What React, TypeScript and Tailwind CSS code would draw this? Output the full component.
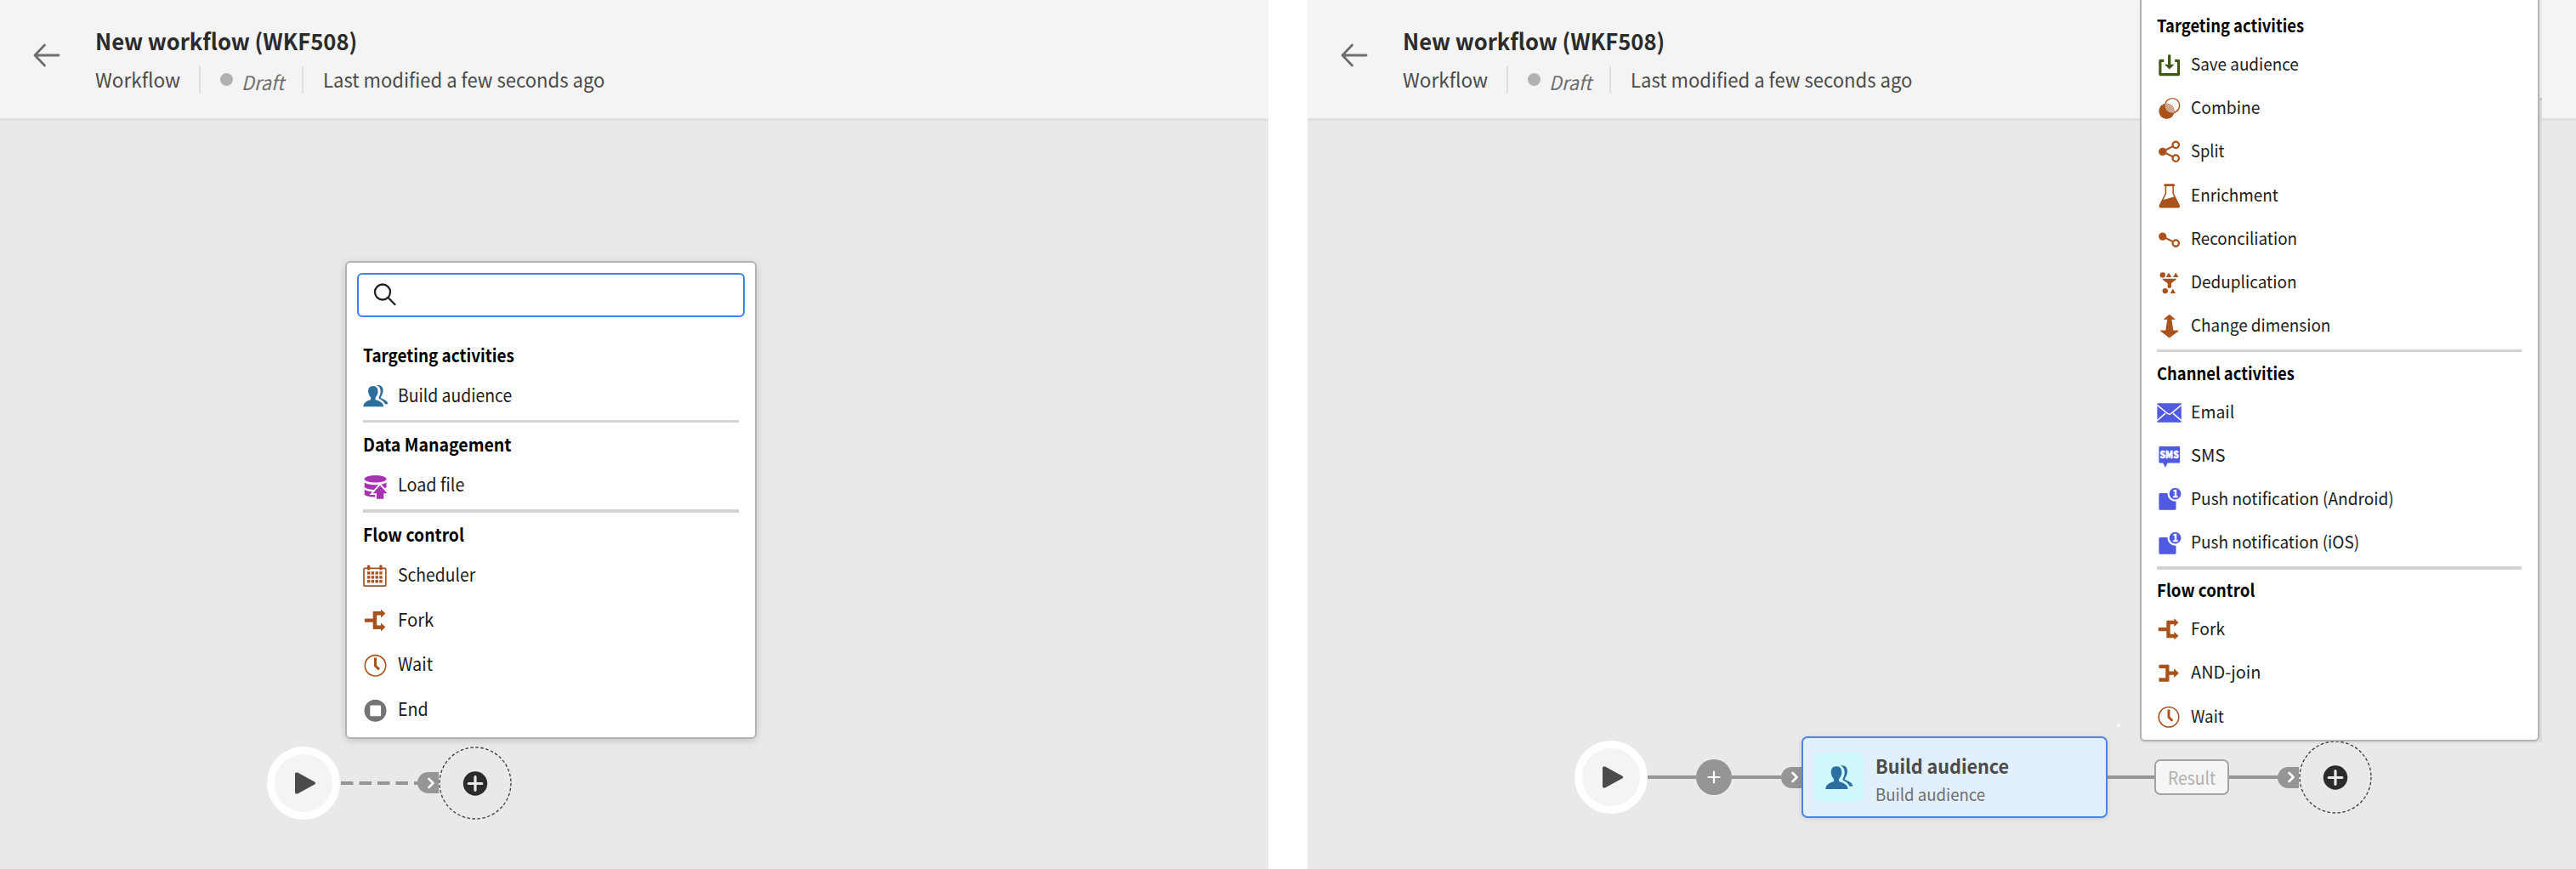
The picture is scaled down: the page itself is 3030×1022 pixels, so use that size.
import { useLayoutEffect, useRef, useState, type ReactNode } from 'react';

const RUST = '#a9521c';
const INDIGO = '#505ae0';

/* One line of text condensed to a fixed advance width. */
function Label({ text, width, className = '' }: { text: string; width: number; className?: string }) {
  const ref = useRef<HTMLSpanElement>(null);
  const [scale, setScale] = useState(1);
  useLayoutEffect(() => {
    if (ref.current) setScale(width / ref.current.offsetWidth);
  }, [width, text]);
  return (
    <span className={`block shrink-0 whitespace-nowrap leading-none ${className}`} style={{ width }}>
      <span ref={ref} className="inline-block origin-left" style={{ transform: `scaleX(${scale})` }}>
        {text}
      </span>
    </span>
  );
}

function Svg({ children, className = 'size-full' }: { children: ReactNode; className?: string }) {
  return (
    <svg viewBox="0 0 30 30" className={className} fill="none">
      {children}
    </svg>
  );
}

const AudienceIcon = ({ className }: { className?: string }) => (
  <Svg className={className}>
    <g fill="#2c6f9f">
      <path d="M11.8 3C7.5 3 5.9 6.2 6.2 10c.3 3 1.6 5 3 6.600V19C6 20.300.6 21.300.3 27.300H24.200C23.900 21.300 17.800 20.300 14.600 19V16.600c1.400-1.600 2.700-3.600 2.900-6.600C17.900 6.200 16 3 11.800 3Z" />
      <path d="M16.300 2.300C20.500 1.200 23.600 4 23.600 8c0 4-1.500 6-2.700 8v1.100c2 1.500 8.200 2.600 8.500 7.200H25.900c-1.300-3.600-4.900-5.200-7.200-6.500V15.700c1.600-2 2-4.700 1.900-7.100-.2-3.100-1.600-5.200-4.300-6.300Z" />
    </g>
  </Svg>
);

const LoadFileIcon = () => (
  <Svg>
    <g fill="#a733b3">
      <ellipse cx="14.600" cy="6.300" rx="13" ry="4.300" />
      <path d="M1.700 10.200c3.800 4 22 4 25.800 0V16c-3.800 4-22 4-25.800 0Z" />
      <path d="M1.700 18.400c3.800 4 22 4 25.800 0v6.200c-3.800 4.200-22 4.200-25.800 0Z" />
    </g>
    <path d="M20 13.800 28.500 23.200H24.300V29.800H16V23.200H11.600Z" fill="#a733b3" stroke="#fff" strokeWidth="3.600" paintOrder="stroke" />
  </Svg>
);

const SchedulerIcon = () => (
  <Svg>
    <rect x="1" y="6.400" width="25.800" height="20.700" rx=".8" stroke={RUST} strokeWidth="1.700" />
    <g fill={RUST}>
      <rect x="5" y="2.500" width="3.300" height="5.900" rx="1.200" />
      <rect x="19.300" y="2.500" width="3.300" height="5.900" rx="1.200" />
      {[10.200, 15.200, 20].map((y) =>
        [5, 9.700, 14.500, 19.300].map((x) => <rect key={`${x}-${y}`} x={x} y={y} width="3.400" height="3.400" />),
      )}
    </g>
  </Svg>
);

const ForkIcon = () => (
  <Svg>
    <path
      fill={RUST}
      d="M1.800 13.200q0-.8.800-.8H11.700V4.800q0-.8.800-.8H21V1.400L26.400 6.400 21 11.400V8.600H17q-.8 0-.8.800V19.600q0 .8.800.8H21V17.500L26.400 22.500 21 27.500V25H12.500q-.8 0-.8-.8V16.800H2.600q-.8 0-.8-.8Z"
    />
  </Svg>
);

const JoinIcon = () => (
  <Svg>
    <path
      fill={RUST}
      d="M2.500 4.800q0-.8.800-.8H14.200q.8 0 .8.800V12H20.800V8.600L26.800 14.100 20.800 19.700V16.300H15V23.700q0 .8-.8.800H3.300q-.8 0-.8-.8V20.800q0-.8.800-.8H10.600V8.400H3.300q-.8 0-.8-.8Z"
    />
  </Svg>
);

const WaitIcon = () => (
  <Svg>
    <circle cx="14.500" cy="14.800" r="12.200" stroke={RUST} strokeWidth="1.600" />
    <path d="M14.500 5.600V15L19 19.400" stroke={RUST} strokeWidth="3" />
  </Svg>
);

const EndIcon = () => (
  <Svg>
    <circle cx="14.500" cy="14.800" r="13" fill="#747474" />
    <rect x="8.300" y="8.600" width="12.800" height="12.600" rx="1" fill="#fff" />
  </Svg>
);

const SaveIcon = () => (
  <Svg>
    <path d="M8.600 9.700H4V26.500H26.400V9.700H21.900" stroke="#3f5712" strokeWidth="3.200" strokeLinejoin="round" />
    <path d="M13.500 3.300q0-1 1-1h1.400q1 0 1 1V14.100H21.300L15.200 20.200 9.200 14.100H13.500Z" fill="#3f5712" />
  </Svg>
);

const CombineIcon = () => (
  <Svg>
    <defs>
      <pattern id="mesh" width="2.400" height="2.400" patternUnits="userSpaceOnUse">
        <rect width="1.200" height="1.200" fill="#fff" />
        <rect x="1.200" y="1.200" width="1.200" height="1.200" fill="#fff" />
      </pattern>
      <clipPath id="lens">
        <circle cx="12" cy="18.300" r="9.200" />
      </clipPath>
    </defs>
    <circle cx="11.900" cy="18.400" r="9.500" fill={RUST} />
    <circle cx="18.800" cy="11.500" r="8.800" stroke={RUST} strokeWidth="1.500" />
    <circle cx="18.800" cy="11.500" r="9" fill="url(#mesh)" clipPath="url(#lens)" />
  </Svg>
);

const SplitIcon = () => (
  <Svg>
    <path d="M20.500 7.900 7 14.800 20.500 21.400" stroke={RUST} strokeWidth="2.200" />
    <circle cx="7" cy="14.900" r="4.800" fill={RUST} />
    <circle cx="23" cy="6.600" r="3.800" fill="#fff" stroke={RUST} strokeWidth="2.400" />
    <circle cx="23" cy="22.900" r="3.800" fill="#fff" stroke={RUST} strokeWidth="2.400" />
  </Svg>
);

const EnrichmentIcon = () => (
  <Svg>
    <rect x="8.800" y=".2" width="13" height="3" rx="1" fill={RUST} />
    <path d="M10.800 3V12L3.600 26.500Q3 28.600 4.800 28.700H26Q27.600 28.600 27 26.500L19.800 12V3" stroke={RUST} strokeWidth="1.600" />
    <path d="M6.900 20 21.500 15.800 27 26.500Q27.600 28.600 26 28.700H4.800Q3 28.600 3.600 26.500Z" fill={RUST} />
  </Svg>
);

const ReconciliationIcon = () => (
  <Svg>
    <path d="M7 11.700 20.500 18.200" stroke={RUST} strokeWidth="2.200" />
    <circle cx="7" cy="11.500" r="4.800" fill={RUST} />
    <circle cx="23" cy="19.700" r="3.800" fill="#fff" stroke={RUST} strokeWidth="2.400" />
  </Svg>
);

const DeduplicationIcon = () => (
  <Svg>
    <g fill={RUST}>
      <circle cx="7" cy="5.600" r="3.300" />
      <path d="M14.500 2.500 17.800 8.300H11.200ZM23 2.500 26.300 8.300H19.700ZM19.500 22.200 22.800 28H16.200Z" />
      <path d="M6.800 10H23.400V11.200L17.500 15.800V20.600L16.700 21.400H14L13.100 20.600V15.800L6.800 11.200Z" />
      <circle cx="10.100" cy="24.900" r="3.300" />
    </g>
  </Svg>
);

const ChangeDimensionIcon = () => (
  <Svg>
    <path fill={RUST} d="M15.200.9 22 6.200V7H18L20 20.200H26.200V21.200L15.200 29.400 4.400 21.200V20.200H10.600L12.700 7H8.500V6.200Z" />
  </Svg>
);

const EmailIcon = () => (
  <Svg>
    <rect x=".4" y="3.400" width="29.400" height="23.200" rx="1" fill={INDIGO} />
    <path d="M.4 5.600 12.800 15.800Q15 17.600 17.300 15.800L29.800 5.600M.4 24.400 10.400 15.600M29.800 24.400 19.700 15.600" stroke="#fff" strokeWidth="1.600" />
  </Svg>
);

const SmsIcon = () => (
  <Svg>
    <path d="M3.400 3.200H27.200q.9 0 .9.900V22.500q0 .9-.9.900H13L10.300 28.900 7.500 23.400H3.400q-.9 0-.9-.9V4.100q0-.9.900-.9Z" fill={INDIGO} />
    <text x="3.600" y="17.400" fontSize="12" fontWeight="900" textLength="23.200" lengthAdjust="spacingAndGlyphs" fill="#fff" stroke="#fff" strokeWidth=".5" fontFamily="'Noto Sans CJK SC', sans-serif">
      SMS
    </text>
  </Svg>
);

const PushIcon = () => (
  <Svg>
    <rect x="2.500" y="7.200" width="20.800" height="20.600" rx="1.500" fill={INDIGO} />
    <circle cx="22.300" cy="7.900" r="9.400" fill="#fff" />
    <circle cx="22.300" cy="7.900" r="7.100" fill={INDIGO} />
    <text x="22.300" y="12.300" textAnchor="middle" fontSize="12" fontWeight="700" fill="#fff" stroke="#fff" strokeWidth=".4" fontFamily="'Noto Sans CJK SC', sans-serif">
      1
    </text>
  </Svg>
);

type Item = { icon: ReactNode; text: string; width: number };
type Section = { title: string; width: number; items: Item[] };

const firstMenu: Section[] = [
  { title: 'Targeting activities', width: 178, items: [{ icon: <AudienceIcon />, text: 'Build audience', width: 134 }] },
  { title: 'Data Management', width: 174.5, items: [{ icon: <LoadFileIcon />, text: 'Load file', width: 78 }] },
  {
    title: 'Flow control',
    width: 119,
    items: [
      { icon: <SchedulerIcon />, text: 'Scheduler', width: 91 },
      { icon: <ForkIcon />, text: 'Fork', width: 42 },
      { icon: <WaitIcon />, text: 'Wait', width: 41 },
      { icon: <EndIcon />, text: 'End', width: 36 },
    ],
  },
];

const secondMenu: Section[] = [
  {
    title: 'Targeting activities',
    width: 173,
    items: [
      { icon: <SaveIcon />, text: 'Save audience', width: 127 },
      { icon: <CombineIcon />, text: 'Combine', width: 81 },
      { icon: <SplitIcon />, text: 'Split', width: 39 },
      { icon: <EnrichmentIcon />, text: 'Enrichment', width: 103 },
      { icon: <ReconciliationIcon />, text: 'Reconciliation', width: 125 },
      { icon: <DeduplicationIcon />, text: 'Deduplication', width: 125 },
      { icon: <ChangeDimensionIcon />, text: 'Change dimension', width: 164 },
    ],
  },
  {
    title: 'Channel activities',
    width: 162,
    items: [
      { icon: <EmailIcon />, text: 'Email', width: 51 },
      { icon: <SmsIcon />, text: 'SMS', width: 40 },
      { icon: <PushIcon />, text: 'Push notification (Android)', width: 239 },
      { icon: <PushIcon />, text: 'Push notification (iOS)', width: 198 },
    ],
  },
  {
    title: 'Flow control',
    width: 115,
    items: [
      { icon: <ForkIcon />, text: 'Fork', width: 40 },
      { icon: <JoinIcon />, text: 'AND-join', width: 82 },
      { icon: <WaitIcon />, text: 'Wait', width: 39 },
    ],
  },
];

function Header() {
  return (
    <header className="flex h-[142px] border-b-[3px] border-[#e0e0e0] bg-[#f4f4f4]">
      <svg viewBox="0 0 32 28" className="mt-[51px] ml-[39px] h-7 w-8 shrink-0" fill="none" stroke="#6e6e6e" strokeWidth="2.800" strokeLinecap="round" strokeLinejoin="round">
        <path d="M30 14H2.500M13.500 2 2 14 13.500 26" />
      </svg>
      <div className="ml-[41px] pt-[35px]">
        <Label text="New workflow (WKF508)" width={308} className="text-[26.5px] font-bold text-[#2b2b2b]" />
        <div className="mt-[16px] flex h-8 items-center text-[23px] text-[#4b4b4b]">
          <Label text="Workflow" width={100} />
          <div className="ml-[22px] h-8 w-0.5 bg-[#e0e0e0]" />
          <div className="ml-[23px] size-[15px] rounded-full bg-[#b1b1b1]" />
          <Label text="Draft" width={50} className="mt-[5px] ml-[10px] text-[#6e6e6e] italic" />
          <div className="ml-[21px] h-8 w-0.5 bg-[#e0e0e0]" />
          <Label text="Last modified a few seconds ago" width={331} className="ml-[23px]" />
        </div>
      </div>
    </header>
  );
}

function StartNode() {
  return (
    <div className="flex size-[86px] shrink-0 items-center justify-center rounded-full border-[9px] border-white bg-[#f4f4f4]">
      <svg viewBox="0 0 26 26" className="ml-[3px] size-[26px]" fill="#4b4b4b">
        <path d="M1 2Q1 .5 2.500.5H4L24.500 11.800Q26 13 24.500 14.200L4 25.500H2.500Q1 25.500 1 24Z" />
      </svg>
    </div>
  );
}

function Port() {
  return (
    <div className="flex h-[25px] w-[25px] shrink-0 items-center justify-center rounded-l-full bg-[#959595] pl-1.5">
      <svg viewBox="0 0 10 14" className="h-3.5 w-2.5" fill="none" stroke="#fff" strokeWidth="2.600" strokeLinecap="round" strokeLinejoin="round">
        <path d="M2.500 2 7.500 7 2.500 12" />
      </svg>
    </div>
  );
}

function AddTarget() {
  return (
    <svg viewBox="0 0 86 86" className="size-[86px] shrink-0" fill="none">
      <circle cx="43" cy="43" r="42" stroke="#3a3a3a" strokeWidth="1.300" strokeDasharray="3.500 2.500" />
      <circle cx="43" cy="43.500" r="14.200" fill="#2b2b2b" />
      <path d="M43 35.700V51.300M35.200 43.500H50.800" stroke="#e9e9e9" strokeWidth="3.200" strokeLinecap="round" />
    </svg>
  );
}

function Menu({ sections, size }: { sections: Section[]; size: 'lg' | 'md' }) {
  const lg = size === 'lg';
  return (
    <>
      {sections.map((section, i) => (
        <section key={section.title}>
          {i > 0 && (
            <div className={lg ? 'flex h-[10.9px] items-start pt-[2px]' : 'flex h-[10.6px] items-start pt-[2.600px]'}>
              <div className="h-[3.500px] w-full bg-[#d3d3d3]" />
            </div>
          )}
          <div className={lg ? 'flex h-[42px] items-center' : 'flex h-10 items-center'}>
            <Label text={section.title} width={section.width} className={lg ? 'pb-0.5 font-bold text-black' : 'font-bold text-black'} />
          </div>
          {section.items.map((item) => (
            <div key={item.text} className={lg ? 'flex h-[52.800px] items-center gap-[11px]' : 'flex h-[51.200px] items-center gap-[11.500px]'}>
              <div className={lg ? 'mt-px size-[30px] shrink-0' : 'mt-0.5 size-[29px] shrink-0'}>{item.icon}</div>
              <Label text={item.text} width={item.width} className={lg ? 'pb-[3px] text-[#1c1c1c]' : 'pb-px text-[#1c1c1c]'} />
            </div>
          ))}
        </section>
      ))}
    </>
  );
}

export default function App() {
  return (
    <div className="flex h-[1022px] w-[3030px] gap-[46px] overflow-hidden bg-white" style={{ fontFamily: "'Noto Sans CJK SC', 'Noto Sans', sans-serif" }}>
      <div className="relative w-[1492px] shrink-0 overflow-hidden bg-[#e9e9e9]">
        <Header />
        <div className="mt-[735.500px] ml-[314px] flex items-center">
          <StartNode />
          <svg viewBox="0 0 91 4" className="h-1 w-[91px] shrink-0">
            <path d="M1 2H91" stroke="#959595" strokeWidth="4" strokeDasharray="14.500 7" />
          </svg>
          <Port />
          <AddTarget />
        </div>
        <div className="absolute top-[307px] left-[406px] h-[562px] w-[484px] rounded-[6px] border-2 border-[#b3b3b3] bg-white px-3 pt-3 shadow-[0_2px_9px_rgba(0,0,0,0.16)]">
          <div className="flex h-[52px] w-[456px] items-center rounded-[6px] border-2 border-[#3f82ee] pb-[3px] pl-4">
            <svg viewBox="0 0 28 28" className="size-7" fill="none" stroke="#222" strokeWidth="2.300" strokeLinecap="round">
              <circle cx="12" cy="11.500" r="9" />
              <path d="M18.500 18 26.500 26" />
            </svg>
          </div>
          <div className="mt-6 ml-[6.500px] w-[442px] text-[20.800px]">
            <Menu sections={firstMenu} size="lg" />
          </div>
        </div>
      </div>

      <div className="relative w-[1492px] shrink-0 overflow-hidden bg-[#e9e9e9]">
        <Header />
        <div className="mt-[724px] ml-[314px] flex items-center">
          <StartNode />
          <div className="h-1 w-[57px] bg-[#959595]" />
          <div className="flex size-[42px] items-center justify-center rounded-full bg-[#959595]">
            <svg viewBox="0 0 16 16" className="size-4" stroke="#fff" strokeWidth="2.200" strokeLinecap="round">
              <path d="M8 1.500V14.500M1.500 8H14.500" />
            </svg>
          </div>
          <div className="h-1 w-[58px] bg-[#959595]" />
          <Port />
          <div className="-ml-px flex h-[96px] w-[360px] items-center rounded-[7px] border-2 border-[#4c86e2] bg-[#e2f0fe] pl-[13px] shadow-[0_1px_6px_rgba(0,0,0,0.12)]">
            <div className="flex size-[58px] items-center justify-center rounded-[7px] bg-[#cff7fe]">
              <AudienceIcon className="size-[33px]" />
            </div>
            <div className="ml-[14px] pt-[5px]">
              <Label text="Build audience" width={157} className="text-[22.800px] font-bold text-[#4b4b4b]" />
              <Label text="Build audience" width={129} className="mt-[11px] text-[19.800px] text-[#6e6e6e]" />
            </div>
          </div>
          <div className="h-1 w-[55px] bg-[#959595]" />
          <div className="flex h-[42px] w-[88px] items-center justify-center rounded-[7px] border-2 border-[#a3a3a3] bg-[#f5f5f5]">
            <Label text="Result" width={56} className="text-[21px] text-[#b1b1b1]" />
          </div>
          <div className="h-1 w-[57px] bg-[#959595]" />
          <Port />
          <AddTarget />
        </div>
        <div className="absolute top-[851px] left-[952px] size-1 rounded-full bg-white" />
        <div className="absolute top-0 left-[979px] flex">
          <div className="h-[872px] w-[470px] rounded-b-[6px] border-2 border-t-0 border-[#b3b3b3] bg-white pt-2.5 pl-[17.500px] shadow-[0_2px_2px_rgba(0,0,0,0.06)]">
            <div className="w-[429px] text-[20.200px]">
              <Menu sections={secondMenu} size="md" />
            </div>
          </div>
          <div className="flex h-[873px] w-[3px] flex-col bg-[#d9d9d9]">
            <div className="h-[115px] bg-[#e8e8e8]" />
            <div className="h-[3px] bg-[#c6c6c6]" />
          </div>
        </div>
      </div>
    </div>
  );
}
